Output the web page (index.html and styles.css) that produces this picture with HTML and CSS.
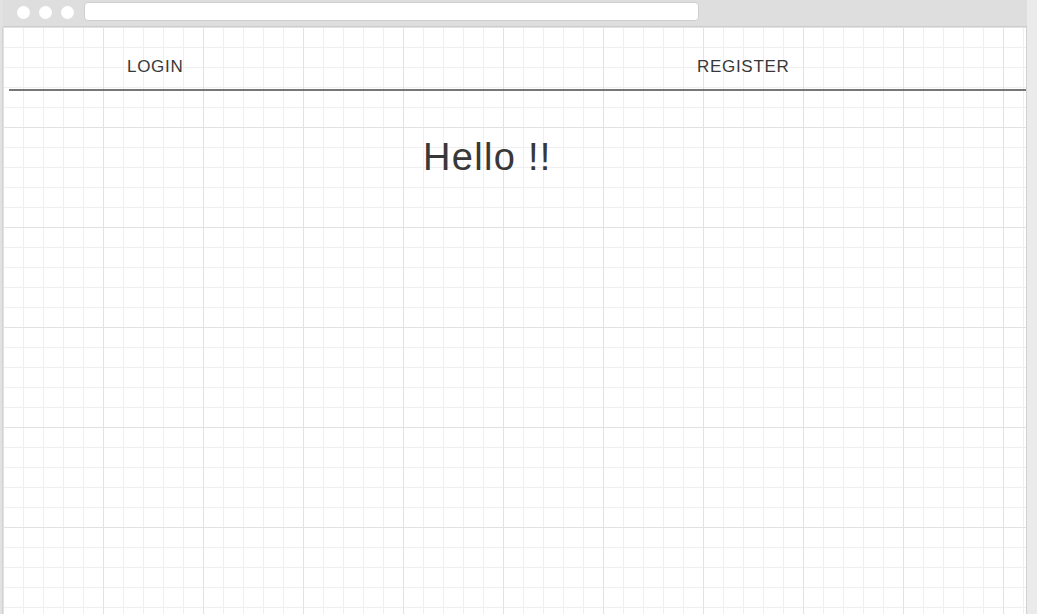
FILE: index.html
```html
<!DOCTYPE html>
<html lang="en">
<head>
<meta charset="utf-8">
<title>Hello</title>
<link rel="stylesheet" href="styles.css">
</head>
<body>
<div class="window">
  <div class="chrome">
    <div class="dots">
      <span class="dot"></span>
      <span class="dot"></span>
      <span class="dot"></span>
    </div>
    <div class="address"></div>
  </div>
  <div class="page">
    <nav class="nav">
      <a class="nav-link" href="#">LOGIN</a>
      <a class="nav-link" href="#">REGISTER</a>
    </nav>
    <h1 class="hello">Hello !!</h1>
  </div>
</div>
</body>
</html>
```

FILE: styles.css
```css
html, body {
  margin: 0;
  padding: 0;
  height: 100%;
}

body {
  background: #ebebeb;
  font-family: "Liberation Sans", Arial, sans-serif;
  color: #383838;
  overflow: hidden;
}

.window {
  width: 1024px;
  height: 614px;
  border-left: 3px solid #e2e2e2;
  display: flex;
  flex-direction: column;
}

.chrome {
  height: 26px;
  background: #dedede;
  border-bottom: 1px solid #cdcdcd;
  display: flex;
  align-items: flex-start;
  flex-shrink: 0;
}

.dots {
  display: flex;
  gap: 9px;
  padding: 6px 0 0 14px;
}

.dot {
  width: 13px;
  height: 13px;
  border-radius: 50%;
  background: #fff;
}

.address {
  margin: 2px 0 0 10px;
  width: 613px;
  height: 17px;
  background: #fff;
  border: 1px solid #cfcfcf;
  border-radius: 4px;
}

.page {
  flex: 1;
  border-left: 1px solid #d2d2d2;
  border-right: 1px solid #d2d2d2;
  margin-left: -1px;
  background-color: #fff;
  background-image:
    linear-gradient(to right, #e2e2e2 1px, transparent 1px),
    linear-gradient(to bottom, #e2e2e2 1px, transparent 1px),
    linear-gradient(to right, #efefef 1px, transparent 1px),
    linear-gradient(to bottom, #efefef 1px, transparent 1px);
  background-size: 100px 100px, 100px 100px, 20px 20px, 20px 20px;
  background-position: 0 0;
}

.nav {
  margin-left: 6px;
  display: grid;
  grid-template-columns: 570px auto;
  padding: 31px 0 13px 118px;
  border-bottom: 2px solid #777;
}

.nav-link {
  font-size: 17px;
  line-height: 18px;
  letter-spacing: 0.7px;
  color: #383838;
  text-decoration: none;
}

.hello {
  margin: 44px 0 0 0;
  padding-left: 420px;
  font-size: 38px;
  line-height: 44px;
  font-weight: normal;
  letter-spacing: 1.3px;
  color: #383838;
}
```
